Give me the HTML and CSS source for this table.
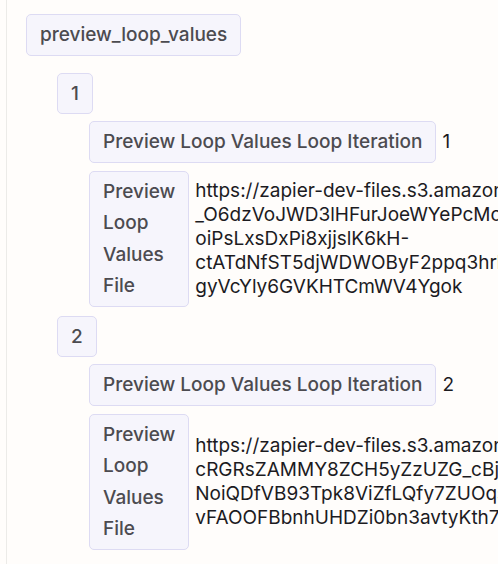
FILE: index.html
```html
<!DOCTYPE html>
<html lang="en">
<head>
<meta charset="utf-8">
<title>preview_loop_values</title>
<link rel="stylesheet" href="styles.css">
</head>
<body>
<div class="tree">
  <div class="node">
    <span class="key">preview_loop_values</span>
    <div class="children first">
      <div class="node">
        <span class="key">1</span>
        <div class="children">
          <div class="row">
            <span class="key">Preview Loop Values Loop Iteration</span>
            <span class="value">1</span>
          </div>
          <div class="row">
            <span class="key narrow">Preview Loop Values File</span>
            <span class="value url">https://zapier-dev-files.s3.amazonaws.com/cli-platform/20260/<br>_O6dzVoJWD3lHFurJoeWYePcMoXq2RtLw8sN/<br>oiPsLxsDxPi8xjjslK6kH-<br>ctATdNfST5djWDWOByF2ppq3hrlUeW9mQ<br>gyVcYly6GVKHTCmWV4Ygok</span>
          </div>
        </div>
      </div>
      <div class="node">
        <span class="key">2</span>
        <div class="children">
          <div class="row">
            <span class="key">Preview Loop Values Loop Iteration</span>
            <span class="value">2</span>
          </div>
          <div class="row">
            <span class="key narrow">Preview Loop Values File</span>
            <span class="value url">https://zapier-dev-files.s3.amazonaws.com/cli-platform/20261/<br>cRGRsZAMMY8ZCH5yZzUZG_cBjT4kWp2xHa/<br>NoiQDfVB93Tpk8ViZfLQfy7ZUOqsLm3Vd<br>vFAOOFBbnhUHDZi0bn3avtyKth7Yc2Qe</span>
          </div>
        </div>
      </div>
    </div>
  </div>
</div>
</body>
</html>
```
FILE: styles.css
```css
html, body {
  margin: 0;
  padding: 0;
  background: #fffdfb;
  overflow: hidden;
}

body {
  font-family: Inter, "Noto Sans", sans-serif;
  font-size: 19px;
}

.tree {
  margin-left: 6px;
  border-left: 1px solid #ecebe8;
  min-height: 100vh;
  padding: 14px 0 0 19px;
  box-sizing: border-box;
}

.node {
  display: flex;
  flex-direction: column;
  align-items: flex-start;
}

.children {
  display: flex;
  flex-direction: column;
  align-items: flex-start;
  gap: 8px;
  margin-top: 7px;
  padding-left: 32px;
}

.children.first {
  margin-top: 17px;
  padding-left: 31px;
  gap: 9px;
}

.key {
  display: inline-block;
  flex: none;
  padding: 4px 13px;
  line-height: 31.5px;
  font-weight: 500;
  color: #4c4b50;
  background: #f6f5fc;
  border: 1px solid #dddbf3;
  border-radius: 5px;
}

.key.narrow {
  width: min-content;
}

.row {
  display: flex;
  align-items: center;
  gap: 6px;
}

.value {
  color: #1c1b1f;
  line-height: 24px;
  white-space: nowrap;
}
```
